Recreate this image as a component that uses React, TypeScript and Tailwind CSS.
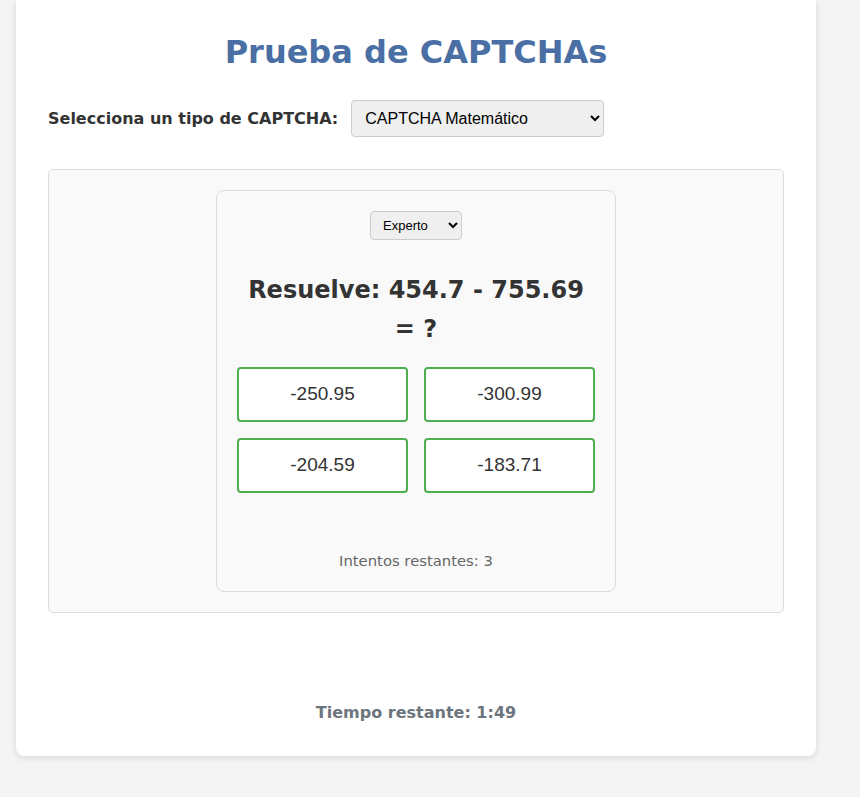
import { useState } from 'react'

const options = ['-250.95', '-300.99', '-204.59', '-183.71']

export default function App() {
  const [tipo, setTipo] = useState('math')
  const [nivel, setNivel] = useState('experto')

  return (
    <div className="min-h-[797px] bg-[#f4f4f4] pl-4 w-[860px]">
      <div className="w-[800px] bg-white rounded-b-lg shadow-[0_2px_6px_rgba(0,0,0,0.12)] px-8 pt-[31px] pb-[31px]">
        <h1 className="text-center text-[32px] leading-[42px] font-bold text-[#4a6fa5] font-['DejaVu_Sans',Verdana,sans-serif]">
          Prueba de CAPTCHAs
        </h1>

        <div className="flex items-center mt-[27px]">
          <label className="text-[16px] font-bold text-[#333] font-['DejaVu_Sans',Verdana,sans-serif] mr-[13px]">
            Selecciona un tipo de CAPTCHA:
          </label>
          <select
            value={tipo}
            onChange={(e) => setTipo(e.target.value)}
            className="w-[253px] h-[37px] pl-[9px] pr-2 bg-[#efefef] border border-[#ccc] rounded text-[16px] text-black font-['Liberation_Sans',Arial,sans-serif]"
          >
            <option value="math">CAPTCHA Matemático</option>
            <option value="text">CAPTCHA de Texto</option>
            <option value="image">CAPTCHA de Imagen</option>
          </select>
        </div>

        <div className="mt-8 bg-[#f9f9f9] border border-[#ddd] rounded-[5px] py-5 flex justify-center">
          <div className="w-[400px] bg-[#f9f9f9] border border-[#ddd] rounded-lg px-5 pt-5 pb-[19px] flex flex-col items-center">
            <select
              value={nivel}
              onChange={(e) => setNivel(e.target.value)}
              className="w-[92px] h-[29px] px-2 bg-[#efefef] border border-[#ccc] rounded text-[13px] text-black font-['Liberation_Sans',Arial,sans-serif]"
            >
              <option value="facil">Fácil</option>
              <option value="medio">Medio</option>
              <option value="dificil">Difícil</option>
              <option value="experto">Experto</option>
            </select>

            <h2 className="mt-[31px] text-center text-[24px] leading-[39px] font-bold text-[#333] font-['DejaVu_Sans',Verdana,sans-serif]">
              Resuelve: 454.7 - 755.69 = ?
            </h2>

            <div className="grid grid-cols-2 gap-4 w-full mt-[18px]">
              {options.map((o) => (
                <button
                  key={o}
                  className="h-[55px] bg-white border-2 border-[#4caf50] rounded text-[19px] text-[#333] font-['Liberation_Sans',Arial,sans-serif]"
                >
                  {o}
                </button>
              ))}
            </div>

            <p className="mt-[57px] text-[14.8px] text-[#666] font-['DejaVu_Sans',Verdana,sans-serif]">
              Intentos restantes: 3
            </p>
          </div>
        </div>

        <p className="mt-[88px] text-center text-[16px] font-bold text-[#6c757d] font-['DejaVu_Sans',Verdana,sans-serif]">
          Tiempo restante: 1:49
        </p>
      </div>
    </div>
  )
}
